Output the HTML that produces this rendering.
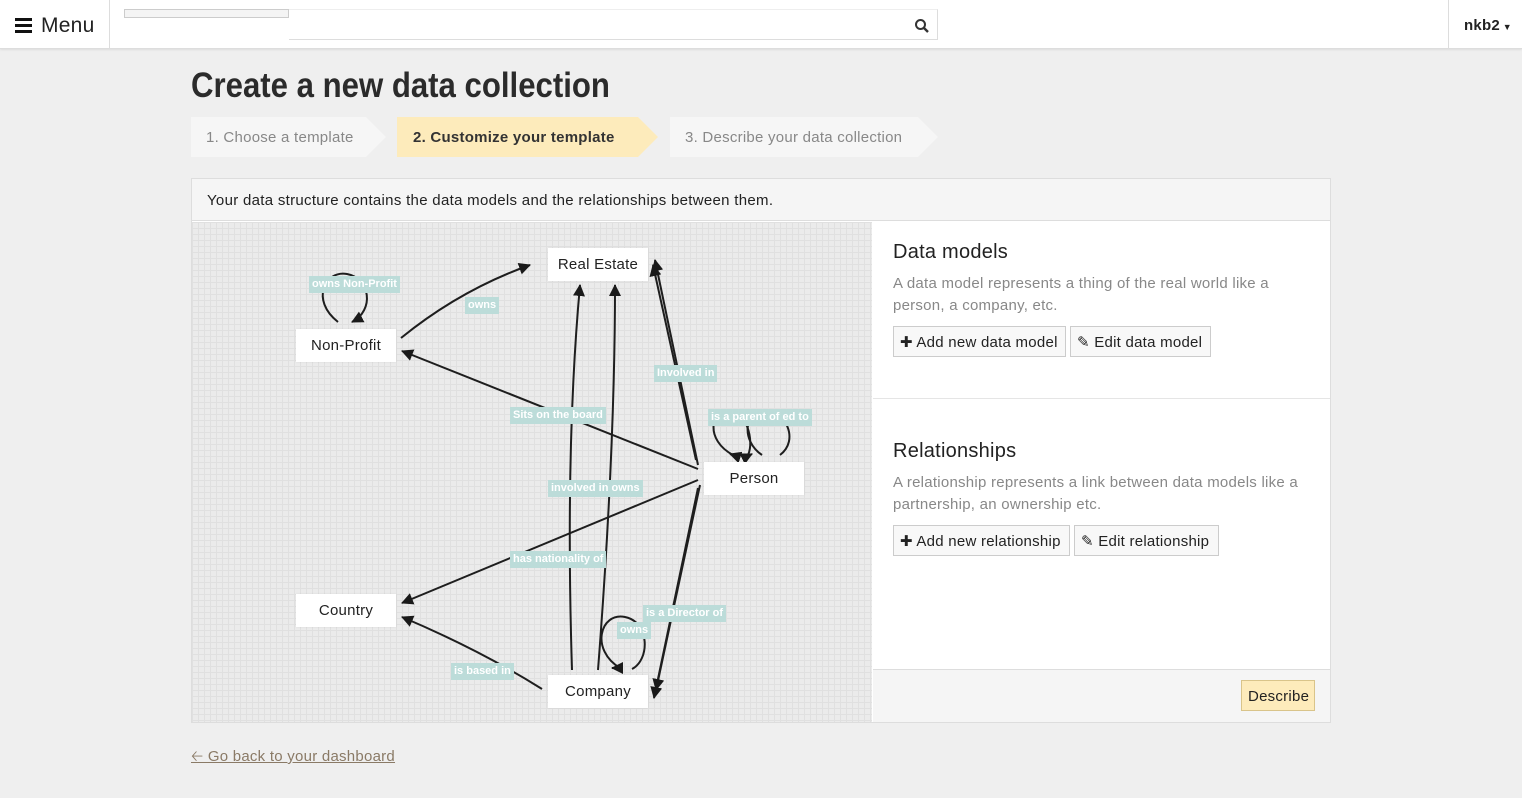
<!DOCTYPE html>
<html><head><meta charset="utf-8"><style>
*{box-sizing:border-box}
body{margin:0;width:1522px;height:798px;background:#efefef;font-family:"Liberation Sans",sans-serif;position:relative;overflow:hidden;color:#222;letter-spacing:0.25px}
.a{position:absolute}
.top{left:0;top:0;width:1522px;height:49px;background:#fff;border-bottom:1px solid #ddd;box-shadow:0 1px 2px rgba(0,0,0,.08)}
.node{position:absolute;background:#fff;font-size:15px;text-align:center;line-height:34px;width:100px;height:33px;box-shadow:0 0 2px rgba(0,0,0,.08)}
.lbl{position:absolute;background:#bcdcd9;color:#fff;font-size:11px;font-weight:bold;padding:0 3px;line-height:17px;white-space:nowrap;letter-spacing:0}
.btn{position:absolute;height:31px;border:1px solid #ccc;background:#f8f8f8;font-size:15px;line-height:31px;padding:0 6px;color:#222;white-space:nowrap}
.step{position:absolute;top:118px;height:40px;line-height:40px;font-size:15px;padding-left:15px}
</style></head><body>
<div class="a top"></div>
<div class="a" style="left:109px;top:0;width:1px;height:49px;background:#ddd"></div>
<div class="a" style="left:1448px;top:0;width:1px;height:49px;background:#ddd"></div>
<svg class="a" style="left:15px;top:18px" width="18" height="15"><rect x="0" y="0" width="17" height="3" fill="#111"/><rect x="0" y="6" width="17" height="3" fill="#111"/><rect x="0" y="12" width="17" height="3" fill="#111"/></svg>
<div class="a" style="left:41px;top:14px;font-size:21px">Menu</div>
<div class="a" style="left:124px;top:9px;width:165px;height:9px;border:1px solid #ccc;background:#f4f4f4"></div>
<div class="a" style="left:289px;top:9px;width:649px;height:31px;border:1px solid #ddd;border-left:none;border-top:1px solid #eee"></div>
<svg class="a" style="left:914px;top:18px" width="16" height="16"><circle cx="6.5" cy="6.5" r="4.5" fill="none" stroke="#333" stroke-width="2"/><line x1="10" y1="10" x2="14" y2="14" stroke="#333" stroke-width="2.4"/></svg>
<div class="a" style="left:1464px;top:17px;font-size:15px;font-weight:bold">nkb2<span style="font-size:9px"> ▼</span></div>

<div class="a" style="left:191px;top:66px;font-size:35px;font-weight:bold;color:#2b2b2b;letter-spacing:0;transform:scaleX(.89);transform-origin:left">Create a new data collection</div>

<svg class="a" style="left:191px;top:117px" width="750" height="41">
<polygon points="0,0 175,0 195,20 175,40 0,40" fill="#f6f6f6"/>
<polygon points="206,0 447,0 467,20 447,40 206,40" fill="#fdebbb"/>
<polygon points="479,0 727,0 747,20 727,40 479,40" fill="#f6f6f6"/>
</svg>
<div class="step" style="left:191px;color:#888">1. Choose a template</div>
<div class="step" style="left:398px;font-weight:bold;color:#333">2. Customize your template</div>
<div class="step" style="left:670px;color:#888">3. Describe your data collection</div>

<div class="a" style="left:191px;top:178px;width:1140px;height:545px;border:1px solid #ddd;background:#fff"></div>
<div class="a" style="left:192px;top:179px;width:1138px;height:42px;background:#f5f5f5;border-bottom:1px solid #ddd;font-size:15px;line-height:44px;padding-left:15px;letter-spacing:0.3px">Your data structure contains the data models and the relationships between them.</div>

<div class="a" style="left:192px;top:222px;width:680px;height:500px;background-color:#ebebeb;background-image:linear-gradient(#e0e0e0 1px,transparent 1px),linear-gradient(90deg,#e0e0e0 1px,transparent 1px);background-size:6px 6px"></div>

<svg class="a" style="left:0;top:0" width="1522" height="798">
<defs><marker id="m" markerWidth="12" markerHeight="12" refX="11" refY="6" orient="auto" markerUnits="userSpaceOnUse"><path d="M0,0 L12,6 L0,12z" fill="#1a1a1a"/></marker></defs>
<g stroke="#1e1e1e" stroke-width="2" fill="none">
<path d="M401,338 Q460,290 530,265" marker-end="url(#m)"/>
<path d="M698,469 L402,351" marker-end="url(#m)"/>
<path d="M698,480 L402,603" marker-end="url(#m)"/>
<path d="M542,689 Q480,650 402,617" marker-end="url(#m)"/>
<path d="M572,670 Q565,450 580,285" marker-end="url(#m)"/>
<path d="M598,670 Q615,450 615,285" marker-end="url(#m)"/>
<path d="M698,465 L655,260" marker-end="url(#m)"/>
<path d="M696,460 L653,265" marker-end="url(#m)"/>
<path d="M698,488 L654,698" marker-end="url(#m)"/>
<path d="M700,485 L656,690" marker-end="url(#m)"/>
<path d="M338,322 C310,300 325,270 347,274 C370,278 375,310 352,322" marker-end="url(#m)"/>
<path d="M620,668 C590,650 600,612 625,617 C650,622 650,660 632,669" />
<path d="M620,668 L612,668" marker-end="url(#m)"/>
<path d="M733,455 C705,440 710,410 730,410 C745,410 755,440 748,455"/>
<path d="M733,455 L730,454" marker-end="url(#m)"/>
<path d="M762,455 C740,440 745,410 765,410 C785,410 800,440 780,455"/>
<path d="M750,455 L752,454" marker-end="url(#m)"/>
</g></svg>

<div class="node" style="left:548px;top:248px">Real Estate</div>
<div class="node" style="left:296px;top:329px">Non-Profit</div>
<div class="node" style="left:704px;top:462px">Person</div>
<div class="node" style="left:296px;top:594px">Country</div>
<div class="node" style="left:548px;top:675px">Company</div>

<div class="lbl" style="left:309px;top:276px">owns Non-Profit</div>
<div class="lbl" style="left:465px;top:297px">owns</div>
<div class="lbl" style="left:654px;top:365px">Involved in</div>
<div class="lbl" style="left:510px;top:407px">Sits on the board</div>
<div class="lbl" style="left:708px;top:409px">is a parent of ed to</div>
<div class="lbl" style="left:548px;top:480px">involved in owns</div>
<div class="lbl" style="left:510px;top:551px">has nationality of</div>
<div class="lbl" style="left:643px;top:605px">is a Director of</div>
<div class="lbl" style="left:617px;top:622px">owns</div>
<div class="lbl" style="left:451px;top:663px">is based in</div>

<div class="a" style="left:873px;top:398px;width:457px;height:1px;background:#e5e5e5"></div>
<div class="a" style="left:893px;top:241px;font-size:20px;color:#222">Data models</div>
<div class="a" style="left:893px;top:273px;width:392px;font-size:15px;line-height:22px;color:#888">A data model represents a thing of the real world like a person, a company, etc.</div>
<div class="btn" style="left:893px;top:326px;width:173px">✚ Add new data model</div>
<div class="btn" style="left:1070px;top:326px;width:141px">✎ Edit data model</div>

<div class="a" style="left:893px;top:440px;font-size:20px;color:#222">Relationships</div>
<div class="a" style="left:893px;top:472px;width:420px;font-size:15px;line-height:22px;color:#888">A relationship represents a link between data models like a partnership, an ownership etc.</div>
<div class="btn" style="left:893px;top:525px;width:177px">✚ Add new relationship</div>
<div class="btn" style="left:1074px;top:525px;width:145px">✎ Edit relationship</div>

<div class="a" style="left:873px;top:669px;width:457px;height:53px;background:#f5f5f5;border-top:1px solid #ddd"></div>
<div class="btn" style="left:1241px;top:680px;width:74px;background:#fdebbb;border-color:#d9c48a">Describe</div>

<div class="a" style="left:191px;top:746px;font-size:15px;color:#8a7a66;text-decoration:underline">&#129120; Go back to your dashboard</div>
</body></html>
